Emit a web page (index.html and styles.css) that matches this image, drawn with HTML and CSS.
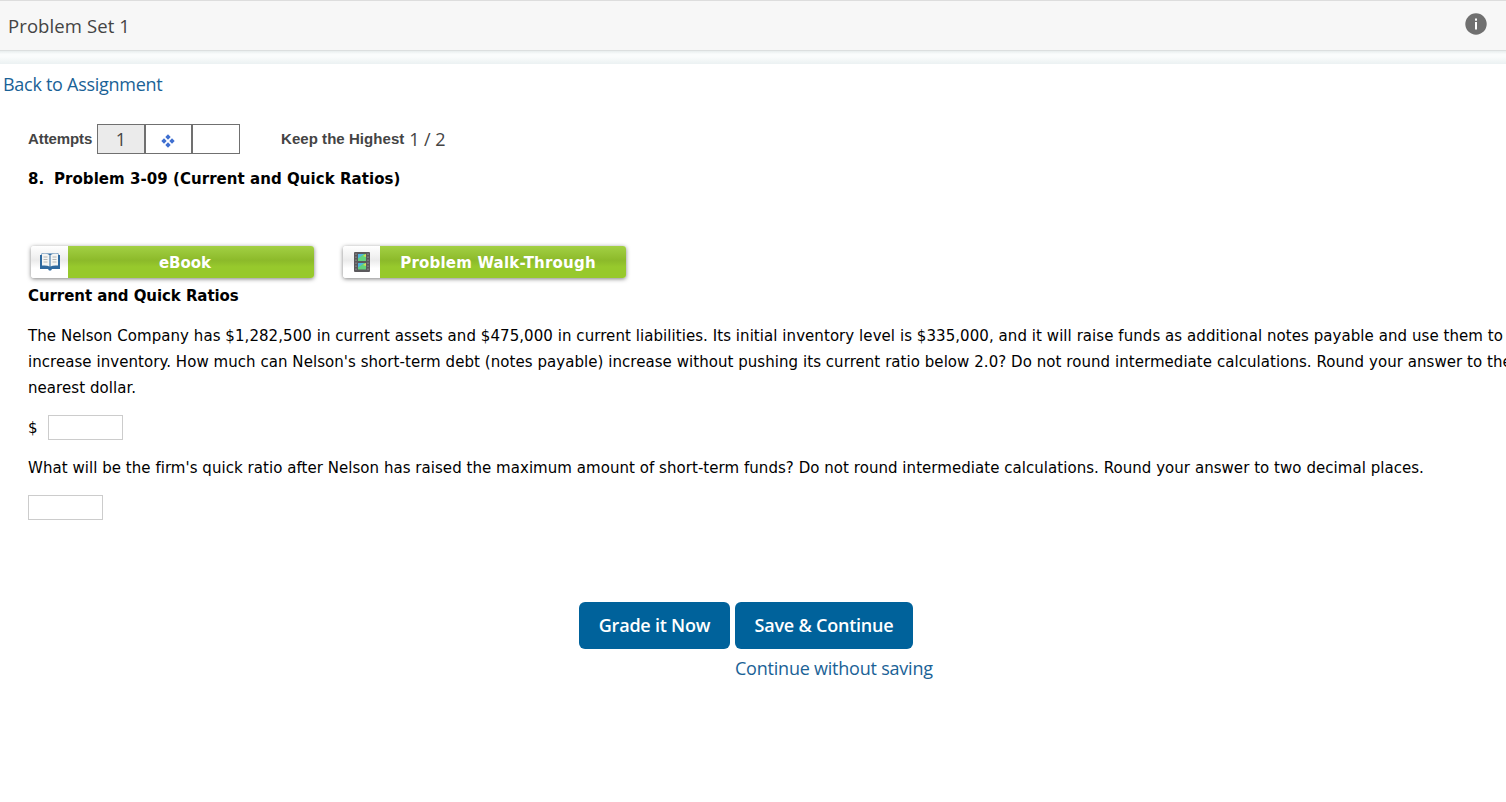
FILE: index.html
```html
<!DOCTYPE html>
<html lang="en">
<head>
  <meta charset="UTF-8" />
  <meta name="viewport" content="width=device-width, initial-scale=1.0"/>
  <title>Problem Set 1</title>
  <link rel="stylesheet" href="styles.css">
</head>
<body>

  <header class="top-bar">
    <h1>Problem Set 1</h1>
    <svg class="info-icon" width="22" height="22" viewBox="0 0 22 22">
      <circle cx="11" cy="11" r="10.7" fill="#707070"/>
      <rect x="10" y="5.500" width="2" height="2.200" fill="#fff"/>
      <rect x="10" y="9" width="2" height="7.500" fill="#fff"/>
    </svg>
  </header>
  <div class="bar-shade"></div>

  <a href="#" class="back-link"><span>Back to Assignment</span></a>

  <main class="problem">
    <div class="attempts">
      <span class="attempts-label">Attempts</span>
      <div class="attempt-boxes">
        <div class="attempt-box used"><span>1</span></div>
        <div class="attempt-box">
          <svg width="14" height="14" viewBox="0 0 14 14" fill="#3f6fd0">
            <path d="M7 .3 9.7 3 7 5.7 4.3 3zM11 4.3 13.7 7 11 9.7 8.3 7zM7 8.3 9.7 11 7 13.7 4.3 11zM3 4.3 5.7 7 3 9.7.3 7z"/>
          </svg>
        </div>
        <div class="attempt-box"></div>
      </div>
      <span class="keep-label">Keep the Highest</span>
      <span class="keep-score">1 / 2</span>
    </div>

    <h2 class="problem-title"><span class="problem-number">8.</span><span>Problem 3-09 (Current and Quick Ratios)</span></h2>

    <div class="resources">
      <a href="#" class="resource-btn">
        <span class="resource-icon">
          <svg width="22" height="20" viewBox="0 0 22 20">
            <path d="M1 3h1.500V1.500h17V3H21v14h-8l-1 1.500h-2L9 17H1z" fill="#2d689f"/>
            <path d="M3 2q5-.7 7.500 1v11.500Q8 13 3 13.500zM19 2q-5-.7-7.500 1v11.500Q14 13 19 13.500z" fill="#f3f4f3"/>
            <path d="M4.500 5h4M4.500 7.500h4M4.500 10h4M13.500 5h4M13.500 7.500h4M13.500 10h4" stroke="#b4b7b7"/>
          </svg>
        </span>
        <span class="resource-name"><span class="ebook-text">eBook</span></span>
      </a>
      <a href="#" class="resource-btn">
        <span class="resource-icon">
          <svg width="16" height="20" viewBox="0 0 16 20">
            <rect width="16" height="20" rx="1" fill="#5b595c"/>
            <rect x="4" y="2" width="8" height="7" fill="#62d27c"/>
            <rect x="4" y="11" width="8" height="6.500" fill="#62d27c"/>
            <path d="M4 2h6L4 6.500zM4 11h6l-6 4.500z" fill="#50b5df"/>
            <path d="M9 4l3-2v3zM9 13l3-2v3z" fill="#d4dd54"/>
            <path d="M2 1.500v17M14 1.500v17" stroke="#858387" stroke-width="1.500" stroke-dasharray="1.500 1.500"/>
          </svg>
        </span>
        <span class="resource-name"><span class="walk-text">Problem Walk-Through</span></span>
      </a>
    </div>

    <h3 class="section-title"><span>Current and Quick Ratios</span></h3>

    <p class="line-a">The Nelson Company has $1,282,500 in current assets and $475,000 in current liabilities. Its initial inventory level is $335,000, and it will raise funds as additional notes payable and use them to<br>
      <span class="line-b">increase inventory. How much can Nelson's short-term debt (notes payable) increase without pushing its current ratio below 2.0? Do not round intermediate calculations. Round your answer to the</span><br>
      nearest dollar.</p>

    <div class="answer">
      <label for="debt">$</label>
      <input type="text" id="debt" />
    </div>

    <p class="line-c">What will be the firm's quick ratio after Nelson has raised the maximum amount of short-term funds? Do not round intermediate calculations. Round your answer to two decimal places.</p>

    <div class="answer">
      <input type="text" id="ratio" />
    </div>
  </main>

  <div class="actions">
    <button type="button" class="grade-btn"><span>Grade it Now</span></button>
    <div class="save-group">
      <button type="button" class="save-btn"><span>Save &amp; Continue</span></button>
      <a href="#" class="skip-link"><span>Continue without saving</span></a>
    </div>
  </div>

</body>
</html>
```

FILE: styles.css
```css
* {
  box-sizing: border-box;
}

body {
  margin: 0;
  height: 802px;
  overflow: hidden;
  background: #fff;
  color: #000;
  font-family: 'Open Sans', sans-serif;
  font-size: 18px;
}

a {
  color: #1a6296;
  text-decoration: none;
}

.top-bar {
  height: 51px;
  padding: 0 19px 0 8px;
  display: flex;
  justify-content: space-between;
  background: #f7f7f7;
  border-top: 1px solid #ddd;
  border-bottom: 1px solid #dcdfdf;
}

.top-bar h1 {
  margin: 0;
  font-size: 18.5px;
  font-weight: 400;
  line-height: 49px;
  letter-spacing: 0.1px;
  color: #444;
}

.info-icon {
  margin-top: 12px;
}

.bar-shade {
  height: 13px;
  background: linear-gradient(#e8eeee, #fafcfc 25%, #fafcfc 45%, #ebf1f2);
}

.back-link {
  display: block;
  margin-left: 3px;
  line-height: 40px;
  letter-spacing: -0.28px;
}

.problem {
  margin-left: 28px;
  font-family: 'DejaVu Sans', sans-serif;
  font-size: 15px;
  line-height: 26px;
  white-space: nowrap;
}

.attempts {
  height: 30px;
  margin-top: 20px;
  display: flex;
  align-items: center;
  color: #444;
}

.attempts-label, .keep-label {
  font-family: 'Liberation Sans', sans-serif;
  font-size: 15px;
  font-weight: bold;
}

.attempts-label {
  width: 69px;
  letter-spacing: -0.1px;
}

.attempt-boxes {
  display: flex;
  width: 143px;
  height: 30px;
  border: 1px solid #707070;
}

.attempt-box {
  flex: 1;
  display: flex;
  align-items: center;
  justify-content: center;
  padding-bottom: 1px;
  font-family: 'Open Sans', sans-serif;
  font-size: 18px;
}

.attempt-box svg {
  margin: 4px 1px 0 0;
}

.attempt-box + .attempt-box {
  border-left: 2px solid #707070;
}

.attempt-box.used {
  background: #ebebeb;
}

.keep-label {
  margin-left: 41px;
  letter-spacing: 0.05px;
}

.keep-score {
  margin-left: 5px;
  padding-bottom: 1px;
  font-family: 'Open Sans', sans-serif;
  font-size: 18px;
  letter-spacing: -0.1px;
}

.problem-title, .section-title {
  margin: 0;
  font-size: 15px;
  font-weight: bold;
  line-height: 26px;
}

.problem-title {
  display: flex;
  margin-top: 12px;
  letter-spacing: 0.05px;
}

.section-title {
  letter-spacing: -0.07px;
}

.problem-number {
  width: 26px;
}

.resources {
  display: flex;
  gap: 29px;
  margin: 54px 0 5px 3px;
}

.resource-btn {
  display: flex;
  width: 283px;
  height: 32px;
  border-radius: 3px;
  overflow: hidden;
  box-shadow: 0 1px 4px rgba(0,0,0,0.5);
}

.resource-icon {
  width: 37px;
  padding-left: 1px;
  display: flex;
  align-items: center;
  justify-content: center;
  background: linear-gradient(#fff, #ebebeb 45%, #fff 70%);
}

.resource-name {
  flex: 1;
  text-align: center;
  line-height: 34px;
  font-weight: bold;
  color: #fff;
  background: linear-gradient(#a3d044, #8cba2a 45%, #97c92c 65%, #97c92c);
}

.ebook-text {
  margin-right: 12px;
}

.walk-text {
  margin-right: 10px;
  letter-spacing: 0.2px;
}

.problem p {
  margin: 14px 0;
}

.line-a {
  letter-spacing: 0.061px;
}

.line-b {
  letter-spacing: 0.053px;
}

.line-c {
  letter-spacing: 0.045px;
}

.answer {
  display: flex;
  align-items: flex-start;
  height: 26px;
}

.answer label {
  width: 20px;
}

.answer input {
  width: 75px;
  height: 25px;
  border: 1px solid #ccc;
}

.actions {
  display: flex;
  align-items: flex-start;
  gap: 5px;
  margin: 81px 0 0 579px;
}

.actions button {
  height: 47px;
  padding: 0 0 1px;
  border: none;
  border-radius: 6px;
  background-color: #00629b;
  color: #fff;
  font-family: 'Open Sans', sans-serif;
  font-size: 18px;
  font-weight: 600;
  letter-spacing: -0.22px;
  cursor: pointer;
}

.grade-btn {
  width: 151px;
}

.save-group {
  display: flex;
  flex-direction: column;
}

.save-btn {
  width: 178px;
}

.skip-link {
  line-height: 38px;
  letter-spacing: -0.22px;
}
```
